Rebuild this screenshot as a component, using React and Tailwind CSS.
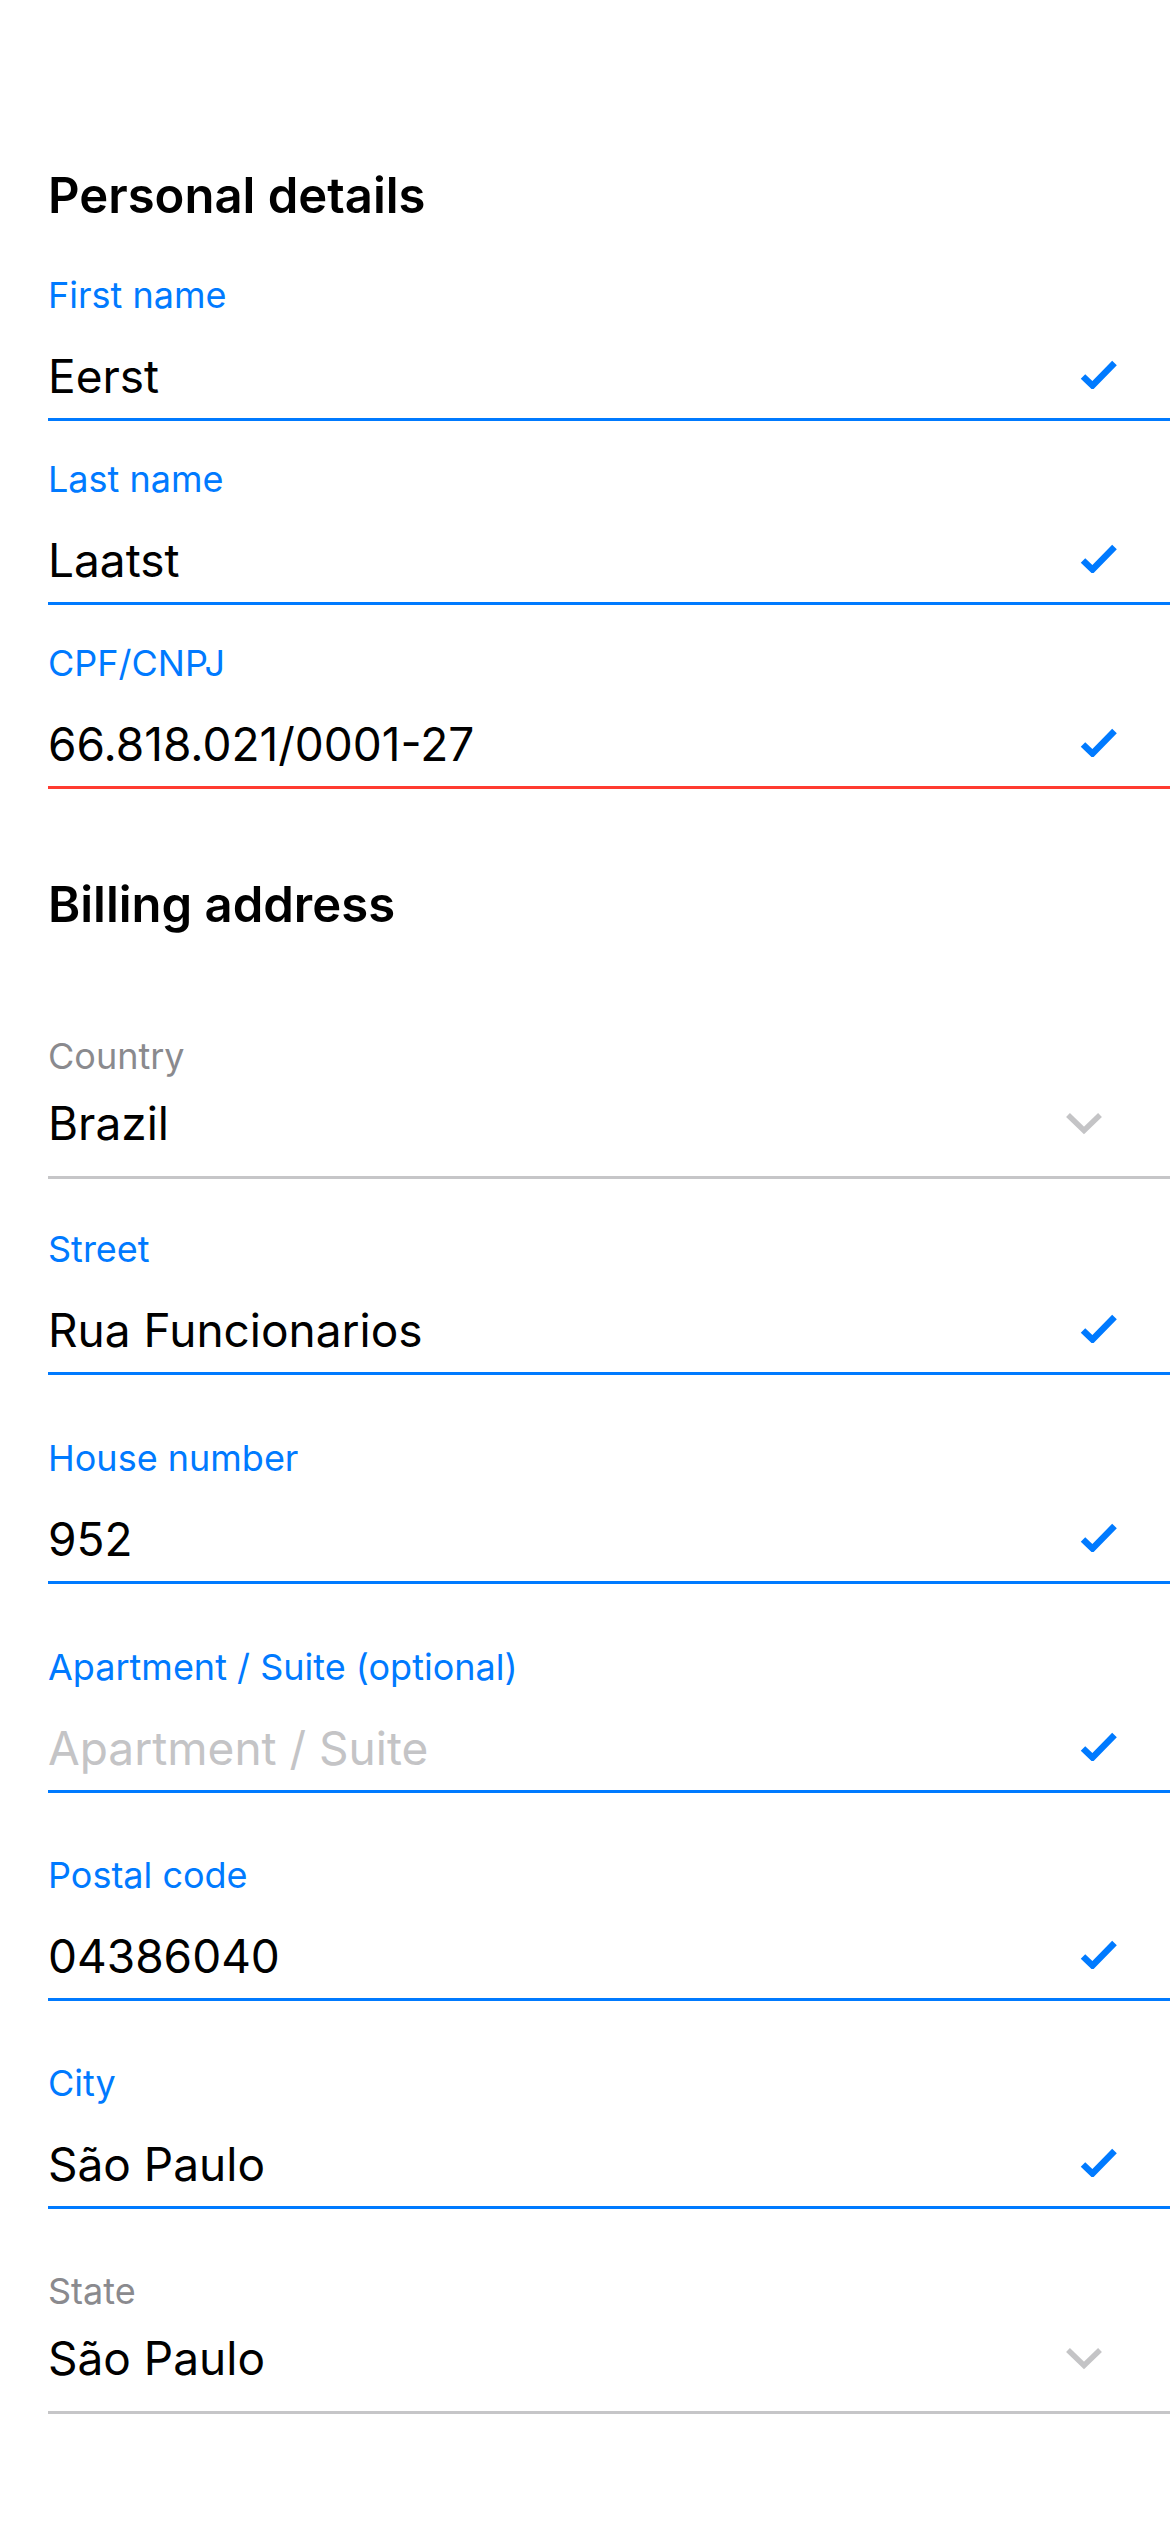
import React from "react";

const personal = [
  { label: "First name", value: "Eerst" },
  { label: "Last name", value: "Laatst" },
  { label: "CPF/CNPJ", value: "66.818.021/0001-27", error: true },
];

const billing = [
  { label: "Country", value: "Brazil", select: true, gap: "mt-[99px]" },
  { label: "Street", value: "Rua Funcionarios", gap: "mt-[48px]" },
  { label: "House number", value: "952", gap: "mt-[61px]" },
  { label: "Apartment / Suite (optional)", placeholder: "Apartment / Suite", gap: "mt-[61px]" },
  { label: "Postal code", value: "04386040", gap: "mt-[60px]" },
  { label: "City", value: "São Paulo", gap: "mt-[60px]" },
  { label: "State", value: "São Paulo", select: true, gap: "mt-[60px]" },
];

function Check() {
  return (
    <svg width="40" height="30" viewBox="0 0 40 30" fill="none">
      <path d="M4 17.5 L13.5 26.5 L35.5 4" stroke="#007aff" strokeWidth="6.5" />
    </svg>
  );
}

function Chevron() {
  return (
    <svg width="38" height="24" viewBox="0 0 38 24" fill="none">
      <path d="M3 4 L19 19.5 L35 4" stroke="#c4c4c6" strokeWidth="5.5" />
    </svg>
  );
}

function Field({ label, value, placeholder, select, error, className }) {
  return (
    <div className={className}>
      <div className={`text-[36px] leading-[44px] ${select ? "text-[#8a8a8e]" : "text-[#007aff]"}`}>{label}</div>
      <div className={`flex items-center justify-between h-[56px] ${select ? "mt-[17px]" : "mt-[31px]"}`}>
        <span className={`text-[46px] leading-[56px] ${value ? "text-black" : "text-[#c4c4c6]"}`}>
          {value || placeholder}
        </span>
        {select ? (
          <span className="mr-[67px] flex">
            <Chevron />
          </span>
        ) : (
          <span className="mr-[51px] -mt-1 flex">
            <Check />
          </span>
        )}
      </div>
      <div
        className={`h-[3px] ${select ? "mt-[25px] bg-[#c6c6c8]" : error ? "mt-[14px] bg-[#ff3b30]" : "mt-[14px] bg-[#007aff]"}`}
      />
    </div>
  );
}

export default function App() {
  return (
    <div className="min-h-screen bg-white pl-[48px] pt-[166px] pb-32 font-['Inter',sans-serif] text-black">
      <h2 className="text-[49px] leading-[60px] font-semibold">Personal details</h2>
      {personal.map((f, i) => (
        <Field key={f.label} {...f} className={i === 0 ? "mt-[47px]" : "mt-[36px]"} />
      ))}

      <h2 className="mt-[86px] text-[49px] leading-[60px] font-semibold">Billing address</h2>
      {billing.map((f) => (
        <Field key={f.label} {...f} className={f.gap} />
      ))}
    </div>
  );
}
